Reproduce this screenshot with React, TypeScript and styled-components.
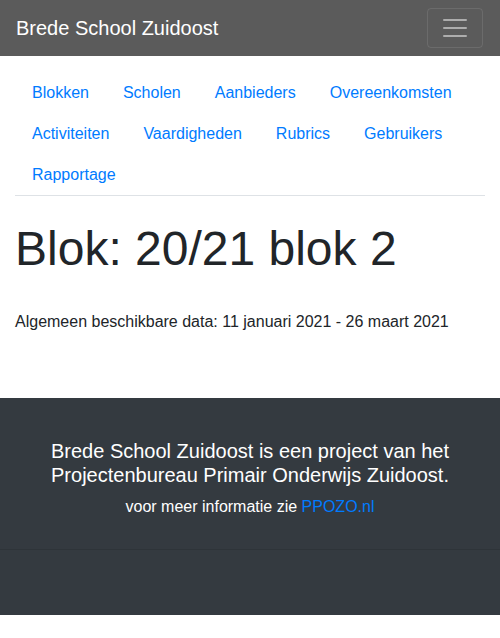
import React from "react";
import styled, { createGlobalStyle } from "styled-components";

const Global = createGlobalStyle`
  html, body { margin: 0; padding: 0; background: #fff; }
  body {
    font-family: "Liberation Sans", Arial, sans-serif;
    font-size: 16px;
    line-height: 1.5;
    color: #212529;
  }
  * { box-sizing: border-box; }
`;

const Navbar = styled.nav`
  height: 56px;
  background: #5b5b5b;
  display: flex;
  align-items: center;
  justify-content: space-between;
  padding: 8px 16px;
`;

const Brand = styled.a`
  font-size: 20px;
  line-height: 30px;
  color: #fff;
  text-decoration: none;
  padding: 5px 0;
`;

const Toggler = styled.button`
  width: 56px;
  height: 40px;
  padding: 4px 12px;
  background: transparent;
  border: 1px solid rgba(255, 255, 255, 0.1);
  border-radius: 4px;
  display: flex;
  align-items: center;
  justify-content: center;
  margin-right: 1px;
`;

const Container = styled.main`
  padding: 16px 15px 48px;
`;

const Tabs = styled.ul`
  list-style: none;
  margin: 0;
  padding: 0;
  display: flex;
  flex-wrap: wrap;
  border-bottom: 1px solid #dee2e6;
`;

const TabItem = styled.li`
  margin-bottom: -1px;
`;

const TabLink = styled.a`
  display: block;
  padding: 8px 16px;
  border: 1px solid transparent;
  color: #007bff;
  text-decoration: none;
  font-size: 16px;
  line-height: 24px;
`;

const Title = styled.h1`
  font-size: 48px;
  font-weight: 400;
  line-height: 1.2;
  margin: 24px 0 32px;
`;

const Para = styled.p`
  margin: 0 0 16px;
`;

const Footer = styled.footer`
  background: #343a40;
  color: #fff;
  height: 217px;
  display: flex;
  flex-direction: column;
`;

const FooterTop = styled.div`
  text-align: center;
  padding: 41px 15px 0;
  height: 152px;
  border-bottom: 1px solid rgba(0, 0, 0, 0.1);
`;

const FooterTitle = styled.h5`
  font-size: 20px;
  font-weight: 400;
  line-height: 1.2;
  margin: 0 0 8px;
`;

const FooterText = styled.p`
  margin: 0;
  font-size: 16px;
  line-height: 24px;
`;

const FooterLink = styled.a`
  color: #007bff;
  text-decoration: none;
`;

const navItems = [
  "Blokken",
  "Scholen",
  "Aanbieders",
  "Overeenkomsten",
  "Activiteiten",
  "Vaardigheden",
  "Rubrics",
  "Gebruikers",
  "Rapportage",
];

export default function App() {
  return (
    <>
      <Global />
      <Navbar>
        <Brand href="#">Brede School Zuidoost</Brand>
        <Toggler aria-label="Toggle navigation">
          <svg width="30" height="30" viewBox="0 0 30 30">
            <path
              d="M4 7h22M4 15h22M4 23h22"
              stroke="rgba(255,255,255,0.5)"
              strokeWidth="2"
              strokeLinecap="round"
            />
          </svg>
        </Toggler>
      </Navbar>
      <Container>
        <Tabs>
          {navItems.map((n) => (
            <TabItem key={n}>
              <TabLink href="#">{n}</TabLink>
            </TabItem>
          ))}
        </Tabs>
        <Title>Blok: 20/21 blok 2</Title>
        <Para>Algemeen beschikbare data: 11 januari 2021 - 26 maart 2021</Para>
      </Container>
      <Footer>
        <FooterTop>
          <FooterTitle>
            Brede School Zuidoost is een project van het
            <br />
            Projectenbureau Primair Onderwijs Zuidoost.
          </FooterTitle>
          <FooterText>
            voor meer informatie zie <FooterLink href="#">PPOZO.nl</FooterLink>
          </FooterText>
        </FooterTop>
      </Footer>
    </>
  );
}
